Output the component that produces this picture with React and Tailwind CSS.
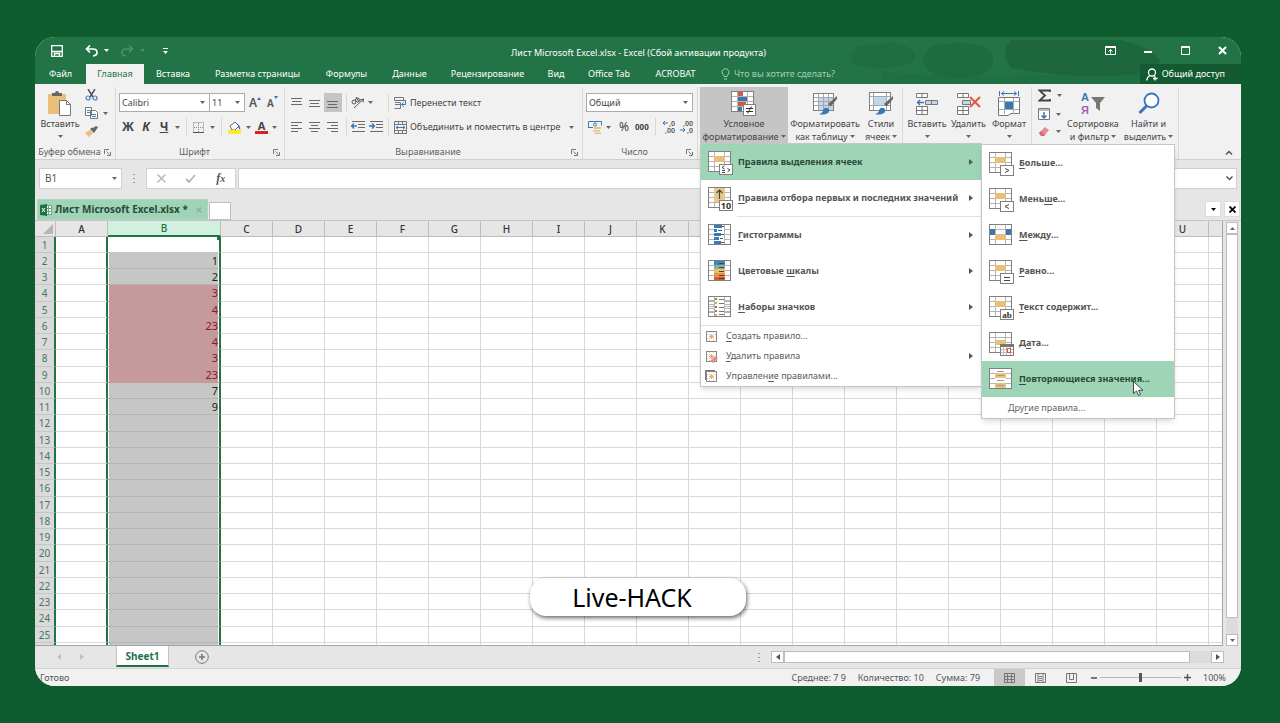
import React from 'react'

const columns = 'ABCDEFGHIJKLMNOPQRSTU'.split('')

// Header letters that sit behind the opened menus
const coveredColumns = 'LMNOPQRST'

const rows = Array.from({ length: 25 }, (_, i) => i + 1)

const columnB = { 2: 1, 3: 2, 4: 3, 5: 4, 6: 23, 7: 4, 8: 3, 9: 23, 10: 7, 11: 9 }

const ribbonTabs = [
  { title: 'Файл', width: 'w-[51px]' },
  { title: 'Главная', width: 'w-[58px]', active: true },
  { title: 'Вставка', width: 'w-[58px]' },
  { title: 'Разметка страницы', width: 'w-[111px]' },
  { title: 'Формулы', width: 'w-[67px]' },
  { title: 'Данные', width: 'w-[59px]' },
  { title: 'Рецензирование', width: 'w-[97px]' },
  { title: 'Вид', width: 'w-[40px]' },
  { title: 'Office Tab', width: 'w-[66px]' },
  { title: 'ACROBAT', width: 'w-[67px]' },
]

function Caret({ className = 'text-[#666]' }) {
  return (
    <svg width="5" height="3" viewBox="0 0 5 3" className={`shrink-0 ${className}`}>
      <path d="M0 0h5L2.5 3z" fill="currentColor" />
    </svg>
  )
}

function Arrow({ left, className = 'text-[#555]' }) {
  return (
    <svg width="4" height="6" viewBox="0 0 4 6" className={`shrink-0 ${className}`}>
      <path d={left ? 'M4 0v6L0 3z' : 'M0 0v6l4-3z'} fill="currentColor" />
    </svg>
  )
}

function Divider() {
  return <div className="w-px h-[18px] bg-[#d8d8d8]" />
}

function Lines({ rows: list }) {
  return (
    <svg width="12" height="12" viewBox="0 0 12 12">
      {list.map(([x, y, w]) => (
        <rect key={y} x={x} y={y} width={w} height="1" fill="#6a6a6a" />
      ))}
    </svg>
  )
}

function Indent({ right }) {
  return (
    <svg width="14" height="12" viewBox="0 0 14 12">
      <path d="M1 .5h13M7 3.5h7M7 6.5h7M1 10.5h13" stroke="#6a6a6a" />
      <path d={right ? 'M0 5h5M3 2.5L5.5 5 3 7.5' : 'M1 5h5M3 2.5L.5 5 3 7.5'} stroke="#3a76b8" strokeWidth="1.4" fill="none" />
    </svg>
  )
}

function Launcher() {
  return (
    <svg width="7" height="7" viewBox="0 0 7 7" fill="none" stroke="#777">
      <path d="M.5 5V.5H5M2.5 2.5l3 3M6.5 3v3.5H3" />
    </svg>
  )
}

// Spreadsheet thumbnail shared by every menu item
function TableIcon({ children }) {
  return (
    <svg width="26" height="28" viewBox="0 -3 26 28" className="shrink-0">
      <rect x=".5" y=".5" width="22" height="20" fill="#fff" stroke="#808080" />
      <path d="M1 5.5h21M1 10.5h21M1 15.5h21M6.5 1v19M16.5 1v19" stroke="#b4b4b4" />
      {children}
    </svg>
  )
}

function Badge({ children }) {
  return (
    <>
      <rect x="11.5" y="13.5" width="13" height="10" fill="#fff" stroke="#808080" />
      {children}
    </>
  )
}

function BadgeText({ children, serif }) {
  return (
    <text x="18" y="22" fontSize="9" textAnchor="middle" fill="#333" fontFamily={serif ? 'Liberation Serif, serif' : 'Noto Sans, sans-serif'}>
      {children}
    </text>
  )
}

function SmallRule({ kind }) {
  return (
    <svg width="13" height="13" viewBox="0 0 13 13" className="shrink-0" fill="none">
      {kind === 'manage' && <path d="M.5 10V.5H10" stroke="#777" />}
      <rect x="1.5" y="1.5" width="10" height="10" fill="#fff" stroke="#888" />
      <path d="M4.5 2v9M8.5 2v9M2 4.5h9M2 8.5h9" stroke="#ccc" strokeDasharray="1 1" />
      <path d="M6.5 4v5M4 6.5h5M5 5l3 3M8 5L5 8" stroke="#e8a24c" strokeWidth=".8" />
      {kind === 'delete' && <path d="M5 11l5-5 3 2-5 5z" fill="#e58a9b" />}
    </svg>
  )
}

const icons = {
  highlight: (
    <TableIcon>
      <rect x="6" y="5" width="11" height="6" fill="#e9c07a" />
      <Badge>
        <path d="M16.5 15l-2.5 1.5 2.5 1.5M14 19.5h3M14 21.5h3M19.5 17.5l2.5 1.5-2.5 2" stroke="#444" fill="none" />
      </Badge>
    </TableIcon>
  ),
  top: (
    <TableIcon>
      <rect x="6" y="1" width="11" height="14" fill="#e9c78d" />
      <path d="M11.5 12V3M8.5 6l3-3 3 3" stroke="#444" strokeWidth="1.2" fill="none" />
      <Badge>
        <BadgeText>10</BadgeText>
      </Badge>
    </TableIcon>
  ),
  bars: (
    <TableIcon>
      <rect x="6" y="1" width="10" height="19" fill="#fff" />
      <path d="M6 1h8v3H6zM6 5h3v3H6zM6 9h7v3H6zM6 13h5v3H6zM6 17h7v3H6z" fill="#3b7ab5" />
      <path d="M14 2.5h2M10 6.5h4M13 10.5h3M12 14.5h3M13 18.5h3" stroke="#555" />
    </TableIcon>
  ),
  scales: (
    <TableIcon>
      <rect x="6" y="1" width="11" height="4" fill="#4383bb" />
      <rect x="6" y="5" width="11" height="4" fill="#86b2a0" />
      <rect x="6" y="9" width="11" height="4" fill="#f0c063" />
      <rect x="6" y="13" width="11" height="4" fill="#ea9148" />
      <rect x="6" y="17" width="11" height="3" fill="#d8592f" />
      <path d="M11 3.5h5M11 7.5h5M11 11.5h5M11 15.5h5M11 18.5h5" stroke="#444" />
    </TableIcon>
  ),
  sets: (
    <TableIcon>
      <path d="M1 4.5h21M1 8.5h21M1 12.5h21M1 16.5h21" stroke="#b4b4b4" />
      <rect x="7" y="1" width="9" height="19" fill="#fff" />
      <path d="M11 3.5h5M11 7.5h5M11 11.5h5M11 15.5h5M11 18.5h5" stroke="#777" />
      <path d="M7 2h2v2H7zM7 14h2v2H7z" fill="#4da66a" />
      <path d="M7 6h2v2H7zM7 18h2v2H7z" fill="#e8a24c" />
      <path d="M7 10h2v2H7z" fill="#d8592f" />
    </TableIcon>
  ),
  greater: (
    <TableIcon>
      <rect x="6" y="5" width="11" height="6" fill="#e9c07a" />
      <Badge>
        <path d="M16 16.5l4 2-4 2" stroke="#444" fill="none" />
      </Badge>
    </TableIcon>
  ),
  less: (
    <TableIcon>
      <rect x="6" y="5" width="11" height="6" fill="#e9c07a" />
      <Badge>
        <path d="M20 16.5l-4 2 4 2" stroke="#444" fill="none" />
      </Badge>
    </TableIcon>
  ),
  between: (
    <TableIcon>
      <path d="M1 5h5v6H1zM17 5h5v6h-5z" fill="#3f74ad" />
      <rect x="6" y="10" width="11" height="6" fill="#e9c07a" />
    </TableIcon>
  ),
  equal: (
    <TableIcon>
      <rect x="6" y="5" width="11" height="6" fill="#e9c07a" />
      <Badge>
        <path d="M15 17.5h6M15 20.5h6" stroke="#444" />
      </Badge>
    </TableIcon>
  ),
  text: (
    <TableIcon>
      <rect x="6" y="5" width="11" height="6" fill="#e9c07a" />
      <Badge>
        <BadgeText serif>ab</BadgeText>
      </Badge>
    </TableIcon>
  ),
  date: (
    <TableIcon>
      <rect x="6" y="8" width="11" height="5" fill="#e9c07a" />
      <Badge>
        <path d="M11 12h14v3H11z" fill="#777" />
        <path d="M14.5 15v8M17.5 15v8M21.5 15v8M12 17.5h12M12 20.5h12" stroke="#bbb" />
        <rect x="18.5" y="16.5" width="3" height="4" stroke="#d8592f" fill="#fff" />
      </Badge>
    </TableIcon>
  ),
  duplicate: (
    <TableIcon>
      <rect x="6" y="1" width="11" height="19" fill="#fff" />
      <path d="M6 5h11v5H6zM6 15h11v5H6z" fill="#e9c07a" />
      <path d="M8 3.5h7M8 7.5h7M8 12.5h7M8 17.5h7" stroke="#999" />
    </TableIcon>
  ),
}

const formatMenu = [
  { icon: 'highlight', text: ['П', 'р', 'авила выделения ячеек'], active: true },
  { icon: 'top', text: ['', 'П', 'равила отбора первых и последних значений'] },
  { icon: 'bars', text: ['', 'Г', 'истограммы'], divided: true },
  { icon: 'scales', text: ['Цветовые ', 'ш', 'калы'] },
  { icon: 'sets', text: ['', 'Н', 'аборы значков'] },
]

const ruleMenu = [
  { icon: 'new', text: ['', 'С', 'оздать правило...'] },
  { icon: 'delete', text: ['', 'У', 'далить правила'], nested: true },
  { icon: 'manage', text: ['Управлен', 'и', 'е правилами...'] },
]

const highlightMenu = [
  { icon: 'greater', text: ['', 'Б', 'ольше...'] },
  { icon: 'less', text: ['Мень', 'ш', 'е...'] },
  { icon: 'between', text: ['', 'М', 'ежду...'] },
  { icon: 'equal', text: ['', 'Р', 'авно...'] },
  { icon: 'text', text: ['', 'Т', 'екст содержит...'] },
  { icon: 'date', text: ['Д', 'а', 'та...'] },
  { icon: 'duplicate', text: ['', 'П', 'овторяющиеся значения...'], active: true },
]

function MenuText({ parts }) {
  return (
    <span className="flex-1 whitespace-nowrap">
      {parts[0]}
      <span className="underline underline-offset-2">{parts[1]}</span>
      {parts[2]}
    </span>
  )
}

function FormatMenu() {
  return (
    <div className="absolute left-0 top-full z-20 w-[282px] bg-white border border-[#c6c6c6] shadow-md text-left">
      {formatMenu.map((item) => (
        <div key={item.icon}>
          {item.divided && <div className="ml-9 h-px bg-[#e1e1e1]" />}
          <button
            className={`flex items-center gap-1 w-full h-9 pl-[7px] pr-2 text-left text-[9px] font-bold ${
              item.active ? 'bg-[#9fd5b7] text-[#2c4a3a]' : 'text-[#555]'
            }`}
          >
            {icons[item.icon]}
            <MenuText parts={item.text} />
            <Arrow />
          </button>
        </div>
      ))}
      <div className="h-px bg-[#e1e1e1]" />
      {ruleMenu.map((item) => (
        <button key={item.icon} className="flex items-center gap-2 w-full h-5 pl-1 pr-2 text-left text-[9px] text-[#5c5c5c]">
          <SmallRule kind={item.icon} />
          <MenuText parts={item.text} />
          {item.nested && <Arrow />}
        </button>
      ))}
      <HighlightMenu />
    </div>
  )
}

function HighlightMenu() {
  return (
    <div className="absolute left-[280px] top-0 w-[194px] bg-white border border-[#c6c6c6] shadow-md">
      {highlightMenu.map((item) => (
        <button
          key={item.icon}
          className={`relative flex items-center gap-1 w-full h-9 pl-[7px] text-left text-[9px] font-bold ${
            item.active ? 'bg-[#9fd5b7] text-[#2c4a3a]' : 'text-[#555]'
          }`}
        >
          {icons[item.icon]}
          <MenuText parts={item.text} />
          {item.active && (
            <svg width="11" height="16" viewBox="0 0 11 16" className="absolute left-[151px] top-5">
              <path d="M.5 .5v12l3-2.5 2 4.5 2-1-2-4.2H10z" fill="#fff" stroke="#222" strokeWidth=".8" />
            </svg>
          )}
        </button>
      ))}
      <button className="flex items-center w-full h-[21px] pl-[26px] text-left text-[9px] text-[#666]">
        <MenuText parts={['Дру', 'г', 'ие правила...']} />
      </button>
    </div>
  )
}

function TitleBar() {
  return (
    <div className="relative flex items-center h-[27px] text-white">
      <svg className="absolute right-0 top-0 h-[47px] w-[400px]" viewBox="0 0 400 47" fill="#1e643b">
        <path d="M10 20q2-14 22-12 24-6 38 4 10 10-4 16-20 6-46 2-10-2-10-10z" opacity=".4" />
        <path d="M82 22q2-16 34-16 34 0 36 14 2 18-26 20-44 2-44-18z" opacity=".55" />
        <path d="M170 3h110q30 6 40 22l-25 12q-60 6-125-6-12-16 0-28z" opacity=".8" />
        <path d="M40 34q60 10 290-2v15H40z" opacity=".3" />
      </svg>
      <div className="relative flex items-center pl-4">
        <button aria-label="Сохранить">
          <svg width="12" height="12" viewBox="0 0 12 12" fill="none" stroke="#fff" strokeWidth="1.3">
            <path d="M.7.7h10.6v10.6H.7zM1 6.5h10M3.5 11V8.5h5V11" />
          </svg>
        </button>
        <button aria-label="Отменить" className="ml-[22px]">
          <svg width="13" height="12" viewBox="0 0 13 12" fill="none" stroke="#fff" strokeWidth="1.7">
            <path d="M5 .5L1.5 4 5 7.5M1.5 4H8q4 0 4 3.5Q12 10.5 8 11" />
          </svg>
        </button>
        <Caret className="ml-1.5 text-white" />
        <button aria-label="Повторить" className="ml-3">
          <svg width="13" height="12" viewBox="0 0 13 12" fill="none" stroke="#4e9169" strokeWidth="1.5">
            <path d="M8 .5L11.5 4 8 7.5M11.5 4H5Q1 4 1 7.5 1 10.5 5 11" />
          </svg>
        </button>
        <Caret className="ml-1.5 text-[#4e9169]" />
        <button aria-label="Настройка панели" className="ml-[18px]">
          <svg width="5" height="6" viewBox="0 0 5 6" fill="#fff">
            <path d="M0 0h5v1H0zM0 3h5L2.5 6z" />
          </svg>
        </button>
      </div>
      <h1 className="relative flex-1 pl-1 pt-1 text-center text-[9px]">
        Лист Microsoft Excel.xlsx - Excel (Сбой активации продукта)
      </h1>
      <div className="relative flex items-center gap-7 pr-[14px]">
        <button aria-label="Параметры ленты">
          <svg width="11" height="9" viewBox="0 0 11 9" fill="none" stroke="#fff">
            <path d="M.5.5h10v8H.5zM1 1.5h9M5.5 7.5v-4M3.5 5.5l2-2 2 2" />
          </svg>
        </button>
        <button aria-label="Свернуть">
          <svg width="9" height="9" viewBox="0 0 9 9">
            <path d="M0 5h8v2H0z" fill="#fff" />
          </svg>
        </button>
        <button aria-label="Развернуть">
          <svg width="9" height="9" viewBox="0 0 9 9" fill="none" stroke="#fff">
            <path d="M.5.5h8v8h-8zM1 1.5h7" />
          </svg>
        </button>
        <button aria-label="Закрыть">
          <svg width="9" height="9" viewBox="0 0 9 9" stroke="#fff" strokeWidth="2">
            <path d="M1 1l7 7M8 1L1 8" />
          </svg>
        </button>
      </div>
    </div>
  )
}

function RibbonTabs() {
  return (
    <div className="relative flex items-stretch h-5 text-[9px] text-white">
      {ribbonTabs.map((tab) => (
        <button
          key={tab.title}
          className={`${tab.width} shrink-0 whitespace-nowrap text-center ${tab.active ? 'bg-[#f1f1f1] text-[#217346]' : ''}`}
        >
          {tab.title}
        </button>
      ))}
      <button className="flex items-center gap-1 pl-3 text-[#a5cdb5] whitespace-nowrap">
        <svg width="9" height="12" viewBox="0 0 9 12" fill="none" stroke="currentColor">
          <path d="M3 8.5Q3 7 1.5 6A3.5 3.5 0 1 1 7.5 6Q6 7 6 8.5zM3 11h3" />
        </svg>
        Что вы хотите сделать?
      </button>
      <button className="flex items-center gap-1 ml-auto pl-1.5 pr-4 bg-[#135a30] whitespace-nowrap">
        <svg width="12" height="13" viewBox="0 0 12 13" fill="none" stroke="#fff" strokeWidth="1.3">
          <circle cx="6" cy="4.5" r="3.5" />
          <path d="M4 7.5Q1 9 .7 12.5M8 7.5l1 1M9 8.5v4M7 10.5h4.5" />
        </svg>
        Общий доступ
      </button>
    </div>
  )
}

function Group({ width, label, children }) {
  return (
    <div className={`${width} shrink-0 flex flex-col h-[72px] mt-[3px] border-r border-[#dadada]`}>
      <div className="h-[58px]">{children}</div>
      {label && (
        <div className="flex items-center h-[14px] pr-1 text-[9px] text-[#5f5f5f] whitespace-nowrap">
          <span className="flex-1 text-center">{label}</span>
          <button aria-label={`Параметры: ${label}`}>
            <Launcher />
          </button>
        </div>
      )}
    </div>
  )
}

function BigButton({ width, icon, lines, active, children }) {
  return (
    <div className={`relative ${width} shrink-0`}>
      <button
        className={`flex flex-col items-center w-full h-14 pt-[3px] text-[9px] leading-[13px] text-[#444] whitespace-nowrap ${
          active ? 'bg-[#c5c5c5]' : ''
        }`}
      >
        <span className="flex items-center justify-center h-[27px]">{icon}</span>
        <span>{lines[0]}</span>
        <span className="flex items-center gap-0.5 h-[13px]">
          {lines[1]}
          <Caret />
        </span>
      </button>
      {children}
    </div>
  )
}

function ClipboardGroup() {
  return (
    <Group width="w-[81px]" label="Буфер обмена">
      <div className="flex">
        <BigButton
          width="w-[50px]"
          lines={['Вставить', '']}
          icon={
            <svg width="24" height="25" viewBox="0 0 24 25">
              <rect x="0" y="3" width="18" height="20" fill="#e9c07a" />
              <path d="M4 5V2h3a2 2 0 0 1 4 0h3v3z" fill="#666" />
              <path d="M11.5 9.5h7l4 4v11h-11z" fill="#fff" stroke="#777" />
              <path d="M18.5 9.5v4h4" fill="none" stroke="#777" />
            </svg>
          }
        />
        <div className="flex flex-col gap-1.5 pt-0.5">
          <button aria-label="Вырезать">
            <svg width="13" height="12" viewBox="0 0 13 12" fill="none" strokeWidth="1.5">
              <path d="M3 0l5 8M10 0L5 8" stroke="#555" />
              <circle cx="3" cy="9" r="2" stroke="#4a7fb8" strokeWidth="1.2" />
              <circle cx="10" cy="9" r="2" stroke="#4a7fb8" strokeWidth="1.2" />
            </svg>
          </button>
          <button aria-label="Копировать" className="flex items-center gap-[5px]">
            <svg width="13" height="12" viewBox="0 0 13 12" fill="#fff" stroke="#777">
              <path d="M.5.5h6v8h-6zM5.5 3.5h5l2 2v6h-7z" />
              <path d="M2 3.5h3M2 5.5h3M7 7.5h4M7 9.5h4" stroke="#4a7fb8" />
            </svg>
            <Caret />
          </button>
          <button aria-label="Формат по образцу">
            <svg width="13" height="12" viewBox="0 0 13 12">
              <path d="M0 8l5-3 3 3-4 4z" fill="#e9c07a" />
              <path d="M5 4l4 4 1.5-2L13 2l-2-1-3 2-1-.5z" fill="#666" />
            </svg>
          </button>
        </div>
      </div>
    </Group>
  )
}

function FontGroup() {
  return (
    <Group width="w-[169px]" label="Шрифт">
      <div className="flex items-center pl-[3px] pt-1.5">
        <label className="flex items-center w-[91px] h-[19px] pr-1 bg-white border border-[#ababab]">
          <select aria-label="Шрифт" className="flex-1 min-w-0 pl-0.5 appearance-none text-[9px] text-[#444]">
            <option>Calibri</option>
          </select>
          <Caret />
        </label>
        <label className="flex items-center w-9 h-[19px] pr-1 -ml-px bg-white border border-[#ababab]">
          <select aria-label="Размер шрифта" className="flex-1 min-w-0 pl-0.5 appearance-none text-[9px] text-[#444]">
            <option>11</option>
          </select>
          <Caret />
        </label>
        <button className="flex ml-1 text-xs font-semibold leading-4 text-[#555]" aria-label="Увеличить размер">
          A
          <svg width="4" height="3" viewBox="0 0 4 3" className="mt-0.5">
            <path d="M0 3h4L2 0z" fill="#3a76b8" />
          </svg>
        </button>
        <button className="flex ml-1.5 text-[10px] font-semibold leading-[18px] text-[#555]" aria-label="Уменьшить размер">
          A
          <svg width="4" height="3" viewBox="0 0 4 3" className="mt-0.5">
            <path d="M0 0h4L2 3z" fill="#3a76b8" />
          </svg>
        </button>
      </div>
      <div className="flex items-center h-[18px] mt-1.5 pl-1.5 text-xs text-[#444]">
        <button className="w-[11px] font-bold">Ж</button>
        <button className="w-2.5 ml-2 font-bold italic">К</button>
        <button className="w-2.5 ml-2 font-bold underline">Ч</button>
        <Caret className="ml-1.5 mr-1.5 text-[#666]" />
        <Divider />
        <button aria-label="Границы" className="mx-1.5">
          <svg width="11" height="11" viewBox="0 0 11 11" fill="none" stroke="#888">
            <path d="M.5.5h10v10M.5.5v10M5.5 1v9M1 5.5h9" strokeDasharray="1 1" />
            <path d="M0 10.5h11" stroke="#555" />
          </svg>
        </button>
        <Caret />
        <span className="ml-1.5">
          <Divider />
        </span>
        <button aria-label="Цвет заливки" className="ml-1.5 mr-[5px]">
          <svg width="13" height="13" viewBox="0 0 13 13">
            <path d="M2 5l5-4 4 4-4 4H4z" fill="#fff" stroke="#666" />
            <path d="M10 3q3 3 2 6l-2-3z" fill="#3a76b8" />
            <rect x="0" y="9" width="13" height="4" fill="#fbec2e" />
          </svg>
        </button>
        <Caret />
        <button className="flex justify-center w-[13px] ml-1 mr-1 text-[11px] font-bold leading-[10px] border-b-[3px] border-[#d8211b]" aria-label="Цвет текста">
          A
        </button>
        <Caret />
      </div>
    </Group>
  )
}

function AlignGroup() {
  return (
    <Group width="w-[298px]" label="Выравнивание">
      <div className="flex items-center h-[19px] mt-1.5 pl-1.5">
        <button aria-label="По верхнему краю"><Lines rows={[[0, 1, 11], [1, 4, 9], [0, 7, 11]]} /></button>
        <button aria-label="По середине" className="ml-1.5"><Lines rows={[[0, 3, 11], [1, 6, 9], [0, 9, 11]]} /></button>
        <button aria-label="По нижнему краю" className="flex items-center justify-center w-[18px] h-[19px] ml-[3px] bg-[#c5c5c5]">
          <Lines rows={[[0, 4, 11], [1, 7, 9], [0, 10, 11]]} />
        </button>
        <span className="ml-1"><Divider /></span>
        <button aria-label="Ориентация" className="ml-1 mr-[3px]">
          <svg width="14" height="13" viewBox="0 0 14 13" fill="none" stroke="#555">
            <circle cx="3" cy="6" r="2" />
            <circle cx="6.5" cy="4" r="2" />
            <path d="M3 12L12 3.5M9 4l3.5-1-.5 3.5M5 1l3 5" />
          </svg>
        </button>
        <Caret />
        <span className="ml-[15px]"><Divider /></span>
        <button className="flex items-center gap-[3px] ml-[5px] text-[9px] text-[#444] whitespace-nowrap">
          <svg width="13" height="13" viewBox="0 0 13 13" fill="none" stroke="#777">
            <path d="M.5 1.5h9v3h-9zM1 6.5h5M1 8.5h5M.5 12.5h6v-6" />
            <path d="M1 4.5h10.5v4H8M9.5 6.5l-2 2 2 2" stroke="#3a76b8" />
          </svg>
          Перенести текст
        </button>
      </div>
      <div className="flex items-center h-[18px] mt-1.5 pl-1.5">
        <button aria-label="По левому краю"><Lines rows={[[0, 1, 11], [0, 4, 7], [0, 7, 11], [0, 10, 7]]} /></button>
        <button aria-label="По центру" className="ml-1.5"><Lines rows={[[0, 1, 11], [2, 4, 7], [0, 7, 11], [2, 10, 7]]} /></button>
        <button aria-label="По правому краю" className="ml-1.5"><Lines rows={[[0, 1, 11], [4, 4, 7], [0, 7, 11], [4, 10, 7]]} /></button>
        <span className="ml-[7px]"><Divider /></span>
        <button aria-label="Уменьшить отступ" className="ml-1"><Indent /></button>
        <button aria-label="Увеличить отступ" className="ml-1"><Indent right /></button>
        <span className="ml-[5px]"><Divider /></span>
        <button className="flex items-center gap-[3px] ml-[5px] text-[9px] text-[#444] whitespace-nowrap">
          <svg width="13" height="13" viewBox="0 0 13 13" fill="none" stroke="#777">
            <path d="M.5.5h12v12H.5zM1 3.5h11M1 9.5h11M4.5 1v2M8.5 1v2M4.5 10v2M8.5 10v2" />
            <path d="M2 6.5h9M4 5L2 6.5 4 8M9 5l2 1.5L9 8" stroke="#3a76b8" />
          </svg>
          Объединить и поместить в центре
        </button>
        <Caret className="ml-auto mr-2 text-[#666]" />
      </div>
    </Group>
  )
}

function Decimal({ more }) {
  return (
    <svg width="13" height="14" viewBox="0 0 13 14" fontFamily="Noto Sans, sans-serif" fontSize="7" fontWeight="600">
      <text x={more ? 7 : 3} y="6" fill="#555">{more ? ',0' : ',00'}</text>
      <text x={more ? 3 : 7} y="13" fill="#555">{more ? ',00' : ',0'}</text>
      <path d={more ? 'M1 3h5M3 1L1 3l2 2' : 'M0 10h5M3 8l2 2-2 2'} stroke="#3a76b8" fill="none" />
    </svg>
  )
}

function NumberGroup() {
  return (
    <Group width="w-[115px]" label="Число">
      <label className="flex items-center w-[107px] h-[19px] mt-1.5 ml-[3px] pr-1 bg-white border border-[#ababab]">
        <select aria-label="Формат числа" className="flex-1 min-w-0 pl-0.5 appearance-none text-[9px] text-[#444]">
          <option>Общий</option>
        </select>
        <Caret />
      </label>
      <div className="flex items-center h-[18px] mt-1.5 pl-[5px] text-[#444]">
        <button aria-label="Денежный формат">
          <svg width="14" height="13" viewBox="0 0 14 13" fill="none">
            <path d="M.5 6.5v-6h13v4" stroke="#3a76b8" />
            <circle cx="7" cy="3.5" r="1.5" stroke="#3a76b8" />
            <path d="M0 6.5h5" stroke="#3a76b8" />
            <path d="M6 6h7v2H6zM5 9h7v1.5H5zM7 11.5h6V13H7z" fill="#e9c07a" />
          </svg>
        </button>
        <Caret className="ml-1 mr-2 text-[#666]" />
        <button className="text-xs leading-4">%</button>
        <button className="ml-1.5 text-[8px] font-bold leading-4">000</button>
        <span className="ml-1.5"><Divider /></span>
        <button aria-label="Увеличить разрядность" className="ml-1.5"><Decimal more /></button>
        <button aria-label="Уменьшить разрядность" className="ml-[5px]"><Decimal /></button>
      </div>
    </Group>
  )
}

function Brush() {
  return (
    <>
      <path d="M25 5l-9 8 2.5 2.500L25 8z" fill="#666" />
      <path d="M7 23q4-1 4-4 2-4 6-1 1 4-3 5-4 1-7 0z" fill="#3a76b8" />
    </>
  )
}

function StylesGroup() {
  return (
    <Group width="w-[205px]">
      <div className="flex pl-0.5">
        <BigButton
          active
          width="w-[88px]"
          lines={['Условное', 'форматирование']}
          icon={
            <svg width="26" height="25" viewBox="0 0 26 25">
              <rect x=".5" y=".5" width="22" height="20" fill="#fff" stroke="#808080" />
              <path d="M1 5.5h21M1 10.5h21M1 15.5h21M6.5 1v19M16.5 1v19" stroke="#b4b4b4" />
              <path d="M7 1h5v4H7zM7 11h8v4H7z" fill="#cf5b45" />
              <path d="M7 6h9v4H7zM7 16h4v4H7z" fill="#3f74ad" />
              <rect x="12.5" y="13.5" width="12" height="11" fill="#fff" stroke="#808080" />
              <path d="M15 17.5h7M15 20.5h7M20.5 15.5l-4 7" stroke="#333" />
            </svg>
          }
        >
          <FormatMenu />
        </BigButton>
        <BigButton
          width="w-[74px]"
          lines={['Форматировать', 'как таблицу']}
          icon={
            <svg width="26" height="25" viewBox="0 0 26 25">
              <rect x="1.5" y="2.5" width="20" height="17" fill="#fff" stroke="#808080" />
              <path d="M7 7h14v12H7z" fill="#c0d7ec" />
              <path d="M2 6.5h19M2 10.5h19M2 14.5h19M6.5 3v16M11.5 3v16M16.5 3v16" stroke="#a8a8a8" />
              <Brush />
            </svg>
          }
        />
        <BigButton
          width="w-[38px]"
          lines={['Стили', 'ячеек']}
          icon={
            <svg width="26" height="25" viewBox="0 0 26 25">
              <rect x="1.5" y="1.5" width="21" height="18" fill="#fff" stroke="#808080" />
              <path d="M2 5.5h20M2 14.5h20M5.5 2v17M18.5 2v17" stroke="#a8a8a8" />
              <path d="M6 6h12v8H6z" fill="#c0d7ec" />
              <Brush />
            </svg>
          }
        />
      </div>
    </Group>
  )
}

function CellsGroup() {
  return (
    <Group width="w-[129px]">
      <div className="flex pl-[3px]">
        <BigButton
          width="w-[42px]"
          lines={['Вставить', '']}
          icon={
            <svg width="22" height="24" viewBox="0 0 22 24" fill="#fff" stroke="#777">
              <path d="M.5 1.5h11v4H.5zM6 1.5v4M.5 14.5h11v8H.5zM.5 18.5h11M6 14.5v8" />
              <path d="M9.5 8.5h12v4h-12zM15.5 8.5v4" fill="#c0d7ec" />
              <path d="M8 10.5H1.5M4 8l-2.5 2.5L4 13" fill="none" stroke="#3a76b8" strokeWidth="1.4" />
            </svg>
          }
        />
        <BigButton
          width="w-[41px]"
          lines={['Удалить', '']}
          icon={
            <svg width="24" height="24" viewBox="0 0 24 24" fill="#fff" stroke="#777">
              <path d="M.5 1.5h11v4H.5zM6 1.5v4M.5 14.5h11v8H.5zM.5 18.5h11M6 14.5v8" />
              <path d="M5.5 8.5h8v4h-8z" fill="#c0d7ec" />
              <path d="M13 5l10 10M23 5L13 15" stroke="#dd5a45" strokeWidth="2" />
            </svg>
          }
        />
        <BigButton
          width="w-[40px]"
          lines={['Формат', '']}
          icon={
            <svg width="24" height="26" viewBox="0 0 24 26" fill="#fff" stroke="#777">
              <path d="M1.5 6.5h21v16H14l-3 2H1.5z" />
              <path d="M2 10.5h20M2 18.5h20M7.5 7v16M16.5 7v16" stroke="#aaa" />
              <rect x="8" y="11" width="8" height="7" fill="#3a76b8" stroke="none" />
              <path d="M2.5 0v5M21.5 0v5M4 2.5h16M7 .5l-2.5 2L7 4.5M17 .5l2.5 2-2.5 2" fill="none" stroke="#3a76b8" />
            </svg>
          }
        />
      </div>
    </Group>
  )
}

function EditGroup() {
  return (
    <Group width="w-[147px]">
      <div className="flex pl-1.5">
        <div className="flex flex-col gap-1.5 w-[27px] pt-0.5">
          <button aria-label="Автосумма" className="flex items-center gap-1.5">
            <svg width="13" height="13" viewBox="0 0 13 13" fill="none" stroke="#444" strokeWidth="1.8">
              <path d="M12 3V1.5H1.5L7 6.5l-5.5 5H12V10" />
            </svg>
            <Caret />
          </button>
          <button aria-label="Заполнить" className="flex items-center gap-1.5">
            <svg width="12" height="12" viewBox="0 0 12 12" fill="#fff" stroke="#777">
              <path d="M.5.5h11v11H.5zM1 2h10" />
              <path d="M6 4v6M3.5 7.5L6 10l2.5-2.5" fill="none" stroke="#3a76b8" strokeWidth="1.5" />
            </svg>
            <Caret />
          </button>
          <button aria-label="Очистить" className="flex items-center gap-1.5">
            <svg width="12" height="11" viewBox="0 0 12 11">
              <path d="M1 7l6-6 4 3-5 6H3z" fill="#e58a9b" />
              <path d="M1 7l2-2 4 4-1 1H3z" fill="#cf6b80" />
            </svg>
            <Caret />
          </button>
        </div>
        <BigButton
          width="w-[56px]"
          lines={['Сортировка', 'и фильтр']}
          icon={
            <span className="flex items-center">
              <span className="flex flex-col font-['Liberation_Sans',sans-serif] text-[11px] font-bold leading-[13px]">
                <span className="text-[#3a76b8]">А</span>
                <span className="text-[#9a63b5]">Я</span>
              </span>
              <svg width="14" height="14" viewBox="0 0 14 14" className="ml-0.5">
                <path d="M0 0h14L9 6v8l-4-3V6z" fill="#777" />
              </svg>
            </span>
          }
        />
        <BigButton
          width="w-[55px]"
          lines={['Найти и', 'выделить']}
          icon={
            <svg width="22" height="24" viewBox="0 0 22 24" fill="none" stroke="#3a76b8">
              <circle cx="13.5" cy="8.5" r="7" strokeWidth="1.8" fill="#fff" />
              <path d="M8.5 14L1.5 21" strokeWidth="3" />
            </svg>
          }
        />
      </div>
    </Group>
  )
}

function Ribbon() {
  return (
    <div className="relative z-10 flex h-[76px] bg-[#f1f1f1] border-b border-[#cfcfcf]">
      <ClipboardGroup />
      <FontGroup />
      <AlignGroup />
      <NumberGroup />
      <StylesGroup />
      <CellsGroup />
      <EditGroup />
      <button aria-label="Свернуть ленту" className="ml-auto mr-2 mb-1 self-end">
        <svg width="8" height="5" viewBox="0 0 8 5" fill="none" stroke="#555" strokeWidth="1.5">
          <path d="M1 4.5l3-3 3 3" />
        </svg>
      </button>
    </div>
  )
}

function FormulaBar() {
  return (
    <div className="flex items-center h-[37px] pl-1 pr-1 text-[#555]">
      <label className="flex items-center w-[83px] h-[21px] pr-1 bg-white border border-[#cfcfcf]">
        <input aria-label="Имя" defaultValue="B1" className="flex-1 min-w-0 pl-[5px] text-[10px]" />
        <Caret />
      </label>
      <svg width="2" height="9" viewBox="0 0 2 9" fill="#999" className="mx-[11px]">
        <path d="M0 0h2v1H0zM0 4h2v1H0zM0 8h2v1H0z" />
      </svg>
      <div className="flex items-center justify-around w-[90px] h-[21px] bg-white border border-[#cfcfcf]">
        <button aria-label="Отмена">
          <svg width="9" height="9" viewBox="0 0 9 9" stroke="#b5b5b5" strokeWidth="1.4">
            <path d="M.5.5l8 8M8.5.5l-8 8" />
          </svg>
        </button>
        <button aria-label="Ввод">
          <svg width="11" height="9" viewBox="0 0 11 9" fill="none" stroke="#b5b5b5" strokeWidth="1.8">
            <path d="M1 5l3 3 6-7" />
          </svg>
        </button>
        <button className="font-['Liberation_Serif',serif] text-xs font-bold italic leading-4">
          f<span className="text-[10px]">x</span>
        </button>
      </div>
      <label className="flex flex-1 items-center h-[21px] ml-0.5 pr-[3px] bg-white border border-[#cfcfcf]">
        <input aria-label="Строка формул" className="flex-1 min-w-0 px-1 text-[10px]" />
        <svg width="7" height="5" viewBox="0 0 7 5" fill="none" stroke="#555" strokeWidth="1.5">
          <path d="M.5.5l3 3 3-3" />
        </svg>
      </label>
    </div>
  )
}

function BookTabs() {
  return (
    <div className="flex items-end h-[23px] pl-0.5 pr-px">
      <button className="flex items-center w-[171px] h-[21px] pl-0.5 bg-[#9fd5b7] border border-[#b9cfc2] text-[10px] font-bold text-[#2c4a3a] whitespace-nowrap">
        <svg width="12" height="12" viewBox="0 0 12 12" className="shrink-0">
          <path d="M5 1.5h6.5v9H5z" fill="#fff" stroke="#6aa583" />
          <path d="M6 4.5h5M6 7.5h5M8.5 2v8" stroke="#6aa583" />
          <path d="M0 1l7-1v12l-7-1z" fill="#217346" />
          <path d="M2 4l3 4M5 4L2 8" stroke="#fff" />
        </svg>
        <span className="ml-[3px]">Лист Microsoft Excel.xlsx *</span>
        <svg width="6" height="6" viewBox="0 0 6 6" stroke="#94ad9f" strokeWidth="1.5" className="shrink-0 ml-auto mr-[5px]">
          <path d="M.5.5l5 5M5.5.5l-5 5" />
        </svg>
      </button>
      <button aria-label="Новая вкладка" className="w-[22px] h-[18px] ml-px bg-white border border-[#bfbfbf]" />
      <button aria-label="Список вкладок" className="flex items-center justify-center w-4 h-4 ml-auto mb-[3px] bg-white border border-[#dcdcdc]">
        <Caret className="text-black" />
      </button>
      <button aria-label="Закрыть книгу" className="flex items-center justify-center w-4 h-4 ml-[3px] mb-[3px] bg-white border border-[#dcdcdc]">
        <svg width="7" height="7" viewBox="0 0 7 7" stroke="#000" strokeWidth="1.8">
          <path d="M.5.5l6 6M6.5.5l-6 6" />
        </svg>
      </button>
    </div>
  )
}

function cellStyle(col, row) {
  if (col === 'A') return 'border-r-2 border-r-[#217346] border-b-[#d9d9d9]'
  if (col !== 'B') return 'border-r border-r-[#d9d9d9] border-b-[#d9d9d9]'
  const side = 'relative pr-px text-right border-r-2 border-r-[#217346] shadow-[inset_1px_0_0_#fff,inset_-1px_0_0_#fff]'
  if (row === 1) return `${side} bg-white border-b-[#c6c6c6]`
  if (row >= 4 && row <= 9) return `${side} bg-[#c59a9e] border-b-[#c59a9e] text-[#8c1823]`
  return `${side} bg-[#c6c6c6] border-b-[#b4b4b4] text-[#222]`
}

function Sheet() {
  return (
    <div className="flex flex-1 min-h-0 border-t border-[#c4c4c4]">
      <div className="flex-1 min-w-0 overflow-hidden border-r border-b border-[#a5a5a5]">
        <table className="w-full table-fixed border-separate border-spacing-0 text-[11px] leading-[14px]">
          <colgroup>
            <col className="w-[21px]" />
            <col className="w-[52px]" />
            <col className="w-[113px]" />
            {columns.slice(2).map((col) => (
              <col key={col} className="w-[52px]" />
            ))}
            <col />
          </colgroup>
          <thead>
            <tr className="h-4 text-[10px] text-[#333]">
              <th className="p-0 border-b border-r border-[#bcbcbc]">
                <svg width="10" height="10" viewBox="0 0 10 10" className="ml-auto mr-0.5">
                  <path d="M10 0v10H0z" fill="#b5b5b5" />
                </svg>
              </th>
              {columns.map((col) => (
                <th
                  key={col}
                  className={`p-0 font-medium border-r ${
                    col === 'B'
                      ? 'bg-[#d2f0e0] text-[#217346] border-b-2 border-b-[#217346] border-r-[#bcbcbc]'
                      : 'border-b border-[#bcbcbc]'
                  }`}
                >
                  {!coveredColumns.includes(col) && col}
                </th>
              ))}
              <th className="p-0 border-b border-[#bcbcbc]" />
            </tr>
          </thead>
          <tbody className="bg-white">
            {rows.map((row) => (
              <tr key={row} className={row % 4 === 0 ? 'h-[17px]' : 'h-4'}>
                <th className="p-0 font-normal text-[10px] bg-[#dadada] text-[#41795a] border-b border-b-[#c6c6c6] border-r-2 border-r-[#217346]">
                  {row}
                </th>
                {columns.map((col) => (
                  <td key={col} className={`p-0 border-b ${cellStyle(col, row)}`}>
                    {col === 'B' && columnB[row]}
                    {col === 'B' && row === 1 && <span className="absolute -right-0.5 top-0 w-1 h-[3px] bg-[#217346]" />}
                  </td>
                ))}
                <td className="p-0 border-b border-b-[#d9d9d9]" />
              </tr>
            ))}
            <tr className="h-0.5">
              <th className="p-0 bg-[#dadada] border-r-2 border-r-[#217346]" />
              {columns.map((col) => (
                <td key={col} className={`p-0 ${cellStyle(col, 26)}`} />
              ))}
              <td />
            </tr>
          </tbody>
        </table>
      </div>
      <div className="flex flex-col w-3 mt-px mr-[3px] ml-[3px] bg-[#dcdcdc]">
        <button aria-label="Вверх" className="flex items-center justify-center h-3 bg-white border border-[#bcbcbc]">
          <Caret className="rotate-180 text-[#666]" />
        </button>
        <div className="flex-1 bg-white border border-[#bcbcbc]" />
        <button aria-label="Вниз" className="flex items-center justify-center h-3 mt-4 bg-white border border-[#bcbcbc]">
          <Caret />
        </button>
      </div>
    </div>
  )
}

function SheetTabs() {
  return (
    <div className="flex items-center h-[22px]">
      <div className="flex items-center gap-[19px] w-[81px] pl-[22px]">
        <Arrow left className="text-[#c0c0c0]" />
        <Arrow className="text-[#c0c0c0]" />
      </div>
      <button className="self-start w-[53px] h-[21px] pt-px bg-white border-x border-x-[#c4c4c4] border-b-2 border-b-[#217346] text-[10px] font-bold text-[#217346]">
        Sheet1
      </button>
      <button aria-label="Новый лист" className="ml-[26px]">
        <svg width="14" height="14" viewBox="0 0 14 14" fill="none" stroke="#777">
          <circle cx="7" cy="7" r="6.3" />
          <path d="M7 4v6M4 7h6" strokeWidth="1.6" />
        </svg>
      </button>
      <div className="flex items-center h-3 w-[466px] ml-auto mr-[17px]">
        <svg width="2" height="9" viewBox="0 0 2 9" fill="#999" className="mr-[11px]">
          <path d="M0 0h2v1H0zM0 4h2v1H0zM0 8h2v1H0z" />
        </svg>
        <button aria-label="Влево" className="flex items-center justify-center w-[13px] h-3 bg-white border border-[#bcbcbc]">
          <Arrow left />
        </button>
        <div className="flex flex-1 h-3 bg-[#dcdcdc]">
          <div className="flex-1 mr-[21px] bg-white border border-[#bcbcbc]" />
        </div>
        <button aria-label="Вправо" className="flex items-center justify-center w-[13px] h-3 bg-white border border-[#bcbcbc]">
          <Arrow />
        </button>
      </div>
    </div>
  )
}

function StatusBar() {
  return (
    <div className="flex items-center h-[18px] pl-[5px] pr-[15px] bg-[#f1f1f1] border-t border-[#d4d4d4] text-[9px] text-[#555] whitespace-nowrap">
      <span>Готово</span>
      <span className="ml-auto">Среднее: 7 9</span>
      <span className="ml-3">Количество: 10</span>
      <span className="ml-3">Сумма: 79</span>
      <button aria-label="Обычный" className="flex items-center justify-center w-[31px] h-full ml-3.5 bg-[#c9c9c9]">
        <svg width="11" height="10" viewBox="0 0 11 10" fill="none" stroke="#777">
          <path d="M.5.5h10v9H.5zM1 3.5h9M1 6.5h9M3.5 1v8M7.5 1v8" />
        </svg>
      </button>
      <button aria-label="Разметка страницы" className="flex items-center justify-center w-[31px] h-full">
        <svg width="11" height="10" viewBox="0 0 11 10" fill="none" stroke="#777">
          <path d="M.5.5h10v9H.5zM3 1v8M8 1v8M4 3.5h3M4 5.5h3M4 7.5h3" />
        </svg>
      </button>
      <button aria-label="Страничный режим" className="flex items-center justify-center w-[31px] h-full">
        <svg width="11" height="10" viewBox="0 0 11 10" fill="none" stroke="#777">
          <path d="M.5.5h10v9H.5zM3.5 1v5.5H8M7.5 1v5.5" />
        </svg>
      </button>
      <button aria-label="Уменьшить" className="w-1.5 h-0.5 ml-1 bg-[#777]" />
      <input
        type="range"
        aria-label="Масштаб"
        defaultValue="50"
        className="w-[81px] h-2.5 mx-[3px] appearance-none bg-transparent [&::-webkit-slider-runnable-track]:h-px [&::-webkit-slider-runnable-track]:bg-[#b8b8b8] [&::-webkit-slider-thumb]:appearance-none [&::-webkit-slider-thumb]:w-[3px] [&::-webkit-slider-thumb]:h-[9px] [&::-webkit-slider-thumb]:-mt-1 [&::-webkit-slider-thumb]:bg-[#555]"
      />
      <button aria-label="Увеличить">
        <svg width="7" height="7" viewBox="0 0 7 7" stroke="#555" strokeWidth="1.5">
          <path d="M3.5 0v7M0 3.5h7" />
        </svg>
      </button>
      <span className="ml-3">100%</span>
    </div>
  )
}

export default function App() {
  return (
    <div className="flex min-h-screen pl-[35px] pr-[39px] py-[37px] bg-[#0f5d2f] font-['Noto_Sans',sans-serif]">
      <div className="relative flex flex-col flex-1 min-w-0 overflow-hidden rounded-[20px] bg-[#e6e6e6]">
        <div className="bg-[#227447]">
          <TitleBar />
          <RibbonTabs />
        </div>
        <Ribbon />
        <FormulaBar />
        <BookTabs />
        <Sheet />
        <SheetTabs />
        <StatusBar />
        {/* Channel caption */}
        <div className="absolute left-1/2 bottom-[70px] flex items-center justify-center w-[216px] h-[38px] pr-3 pt-0.5 -translate-x-1/2 rounded-2xl bg-white shadow-[1px_2px_4px_rgba(0,0,0,0.6)] text-[25px] text-black">
          Live-HACK
        </div>
      </div>
    </div>
  )
}
